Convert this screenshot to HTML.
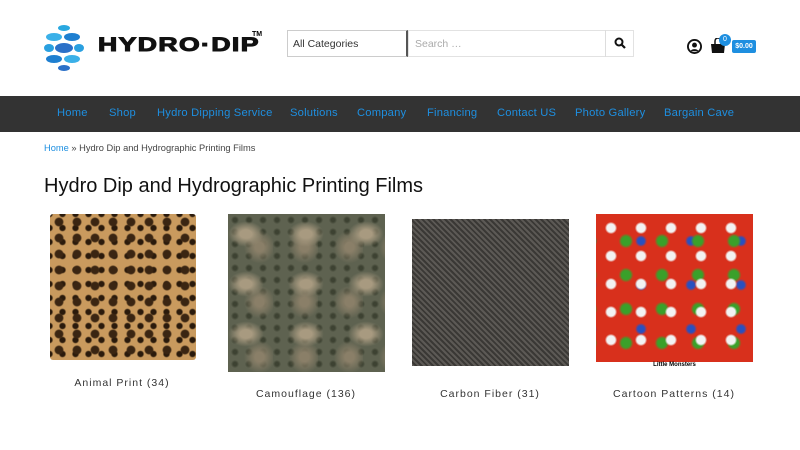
<!DOCTYPE html>
<html><head><meta charset="utf-8"><style>
*{margin:0;padding:0;box-sizing:border-box}
body{width:800px;height:450px;background:#fff;font-family:"Liberation Sans",sans-serif;position:relative;overflow:hidden}
.abs{position:absolute}
.nav{position:absolute;top:96px;left:0;width:800px;height:36px;background:#333}
.nav span{position:absolute;top:11px;color:#1e8fe0;font-size:11.2px;letter-spacing:0.2px}
.lbl{position:absolute;font-size:10.5px;letter-spacing:1px;color:#333;text-align:center;width:180px}
</style></head><body>
<svg class="abs" style="left:43px;top:24px" width="42" height="48" viewBox="0 0 42 48">
<ellipse cx="21" cy="4" rx="6" ry="3" fill="#29a8e0"/>
<ellipse cx="11" cy="13" rx="8" ry="4" fill="#3bb0e8"/><ellipse cx="29" cy="13" rx="8" ry="4" fill="#1e7fd0"/>
<ellipse cx="6" cy="24" rx="5" ry="4" fill="#2aa0e0"/><ellipse cx="21" cy="24" rx="9" ry="5" fill="#2b70c8"/><ellipse cx="36" cy="24" rx="5" ry="4" fill="#2aa0e0"/>
<ellipse cx="11" cy="35" rx="8" ry="4" fill="#1e7fd0"/><ellipse cx="29" cy="35" rx="8" ry="4" fill="#3bb0e8"/>
<ellipse cx="21" cy="44" rx="6" ry="3" fill="#2b70c8"/>
</svg>
<div class="abs" style="left:98px;top:36px;font-size:19px;font-weight:900;letter-spacing:1px;color:#111;transform:scaleX(1.4);transform-origin:left;line-height:20px;-webkit-text-stroke:1px #111">HYDRO·DIP</div>
<div class="abs" style="left:252px;top:31px;font-size:7px;font-weight:bold">TM</div>
<div class="abs" style="left:287px;top:30px;width:121px;height:27px;border:1px solid #ccc;border-right:2px solid #555;font-size:10.5px;color:#333;padding:7px 5px">All Categories</div>
<div class="abs" style="left:408px;top:30px;width:226px;height:27px;border:1px solid #e2e2e2;font-size:10.5px;color:#aaa;padding:7px 6px">Search …</div>
<div class="abs" style="left:605px;top:30px;width:1px;height:27px;background:#ddd"></div>
<svg class="abs" style="left:614px;top:37px" width="12" height="12" viewBox="0 0 12 12"><circle cx="5" cy="5" r="3.5" fill="none" stroke="#111" stroke-width="2"/><path d="M7.5 7.5L11 11" stroke="#111" stroke-width="2.2"/></svg>
<svg class="abs" style="left:687px;top:39px" width="15" height="15" viewBox="0 0 16 16"><circle cx="8" cy="8" r="7" fill="none" stroke="#111" stroke-width="2"/><circle cx="8" cy="6.5" r="2.6" fill="#111"/><path d="M3.5 13a5 4 0 0 1 9 0" fill="#111"/></svg>
<svg class="abs" style="left:710px;top:38px" width="16" height="15" viewBox="0 0 16 15"><path d="M1 6h14l-1 9H2z" fill="#111"/><path d="M5 6V3a3 3 0 0 1 6 0v3" fill="none" stroke="#111" stroke-width="1.5"/></svg>
<div class="abs" style="left:719px;top:34px;width:12px;height:12px;border-radius:6px;background:#1e8fe0;color:#fff;font-size:7px;text-align:center;line-height:12px">0</div>
<div class="abs" style="left:732px;top:40px;width:24px;height:13px;border-radius:2px;background:#1e8fe0;color:#fff;font-size:7px;font-weight:bold;text-align:center;line-height:13px">$0.00</div>
<div class="nav">
<span style="left:57px">Home</span><span style="left:109px">Shop</span><span style="left:157px">Hydro Dipping Service</span><span style="left:290px">Solutions</span><span style="left:357px">Company</span><span style="left:427px">Financing</span><span style="left:497px">Contact US</span><span style="left:575px">Photo Gallery</span><span style="left:664px">Bargain Cave</span>
</div>
<div class="abs" style="left:44px;top:143px;font-size:9.3px;color:#444"><span style="color:#1e8fe0">Home</span> » Hydro Dip and Hydrographic Printing Films</div>
<div class="abs" style="left:44px;top:175px;font-size:20px;color:#111">Hydro Dip and Hydrographic Printing Films</div>
<div class="abs" style="left:50px;top:214px;width:146px;height:146px;border-radius:3px;background-color:#c99a5e;background-image:radial-gradient(circle at 50% 50%,#3a2512 30%,transparent 42%),radial-gradient(circle at 50% 50%,#2a1a0c 25%,transparent 40%);background-size:18px 16px,13px 14px;background-position:0 0,6px 7px"></div>
<div class="abs" style="left:228px;top:214px;width:157px;height:158px;background-color:#5e6250;background-image:radial-gradient(ellipse at 30% 40%,#a89a80 10%,transparent 30%),radial-gradient(ellipse at 70% 60%,#8a7f68 10%,transparent 35%),radial-gradient(circle,#3d4232 20%,transparent 45%);background-size:60px 50px,45px 55px,14px 12px"></div>
<div class="abs" style="left:412px;top:219px;width:157px;height:147px;background-color:#4a4744;background-image:repeating-linear-gradient(45deg,#5c5955 0 2px,#3a3835 2px 4px)"></div>
<div class="abs" style="left:596px;top:214px;width:157px;height:158px;background-color:#d8301c;background-image:radial-gradient(circle,#f2f2f2 20%,transparent 30%),radial-gradient(circle,#3aa02a 18%,transparent 30%),radial-gradient(circle,#2850c0 10%,transparent 18%);background-size:30px 28px,36px 34px,50px 44px;background-position:0 0,12px 10px,20px 5px"></div>
<div class="abs" style="left:596px;top:362px;width:157px;height:10px;background:#fff;font-size:6px;text-align:center;font-weight:bold">Little Monsters</div>
<div class="lbl" style="left:32px;top:377px">Animal Print (34)</div>
<div class="lbl" style="left:216px;top:388px">Camouflage (136)</div>
<div class="lbl" style="left:400px;top:388px">Carbon Fiber (31)</div>
<div class="lbl" style="left:584px;top:388px">Cartoon Patterns (14)</div>
</body></html>
